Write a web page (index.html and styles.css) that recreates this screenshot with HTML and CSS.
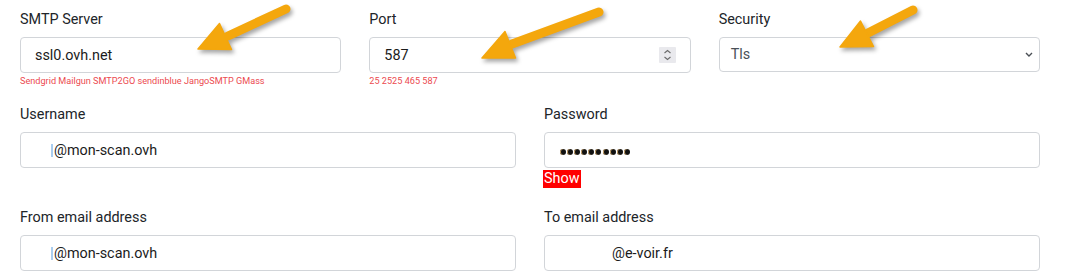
FILE: index.html
```html
<!DOCTYPE html>
<html lang="en">
<head>
<meta charset="utf-8">
<title>SMTP settings</title>
<link rel="stylesheet" href="styles.css">
</head>
<body>
<form class="form">
  <div class="row row-3">
    <div class="group">
      <label class="label">SMTP Server</label>
      <div class="field"><span class="value">ssl0.ovh.net</span></div>
      <div class="help">Sendgrid Mailgun SMTP2GO sendinblue JangoSMTP GMass</div>
    </div>
    <div class="group">
      <label class="label">Port</label>
      <div class="field field-number">
        <span class="value">587</span>
        <svg class="spinner" width="17" height="16" viewBox="0 0 17 16">
          <rect width="17" height="16" rx="1" fill="#e9e9ed"/>
          <path d="M5.5 6 L8.5 3.5 L11.5 6" fill="none" stroke="#6b6b6b" stroke-width="1.1"/>
          <path d="M5.5 10 L8.5 12.5 L11.5 10" fill="none" stroke="#6b6b6b" stroke-width="1.1"/>
        </svg>
      </div>
      <div class="help">25 2525 465 587</div>
    </div>
    <div class="group">
      <label class="label">Security</label>
      <div class="field field-select">
        <span class="value value-select">Tls</span>
        <svg class="chevron" width="8" height="5" viewBox="0 0 8 5">
          <path d="M1 1 L4 4 L7 1" fill="none" stroke="#4a4f55" stroke-width="1.4"/>
        </svg>
      </div>
    </div>
  </div>

  <div class="row row-2">
    <div class="group">
      <label class="label">Username</label>
      <div class="field"><span class="redact redact-user"></span><span class="sliver"></span><span class="value">@mon-scan.ovh</span></div>
    </div>
    <div class="group">
      <label class="label">Password</label>
      <div class="field field-pass">
        <span class="dots">
          <i class="dot"></i><i class="dot"></i><i class="dot"></i><i class="dot"></i><i class="dot"></i>
          <i class="dot"></i><i class="dot"></i><i class="dot"></i><i class="dot"></i><i class="dot"></i>
        </span>
      </div>
      <span class="show">Show</span>
    </div>
  </div>

  <div class="row row-2">
    <div class="group">
      <label class="label">From email address</label>
      <div class="field"><span class="redact redact-user"></span><span class="sliver"></span><span class="value">@mon-scan.ovh</span></div>
    </div>
    <div class="group">
      <label class="label">To email address</label>
      <div class="field"><span class="redact redact-to"></span><span class="value">@e-voir.fr</span></div>
    </div>
  </div>
</form>

<svg class="arrows" width="1067" height="279" viewBox="0 0 1067 279">
  <g class="arrow">
    <line x1="286" y1="9" x2="228" y2="36" />
    <polygon points="198,49 231.5,49.5 219.5,23.5" />
  </g>
  <g class="arrow">
    <line x1="599" y1="12" x2="512" y2="44" />
    <polygon points="482,58 515.5,58 505,31.5" />
  </g>
  <g class="arrow">
    <line x1="913" y1="10" x2="868" y2="33" />
    <polygon points="840,47 873.5,46.5 860.5,21" />
  </g>
</svg>
</body>
</html>
```

FILE: styles.css
```css
html, body {
  margin: 0;
  padding: 0;
  background: #ffffff;
}

body {
  position: relative;
  width: 1067px;
  height: 279px;
  overflow: hidden;
  font-family: Roboto, "Liberation Sans", Arial, sans-serif;
  color: #212529;
}

.form {
  padding: 9px 27px 0 20px;
}

.row {
  display: grid;
  column-gap: 28px;
}

.row-3 {
  grid-template-columns: 1fr 1fr 1fr;
  margin-bottom: 17px;
}

.row-2 {
  grid-template-columns: 1fr 1fr;
  margin-bottom: 19px;
}

.group {
  display: flex;
  flex-direction: column;
  align-items: flex-start;
}

.label {
  display: block;
  font-size: 14.4px;
  line-height: 21.6px;
  margin-bottom: 6.5px;
  color: #212529;
}

.field {
  box-sizing: border-box;
  width: 100%;
  height: 36px;
  border: 1px solid #d2d5d9;
  border-radius: 4px;
  padding: 0 14px 0 14px;
  display: flex;
  align-items: center;
  font-size: 14.4px;
  color: #1b1b1b;
  background: #fff;
}

.value {
  white-space: nowrap;
}

.field-number {
  justify-content: space-between;
}

.spinner {
  display: block;
}

.field-select {
  height: 35px;
  padding-left: 11px;
  padding-right: 6px;
  justify-content: space-between;
}

.value-select {
  color: #495057;
}

.chevron {
  display: block;
}

.help {
  margin-top: 2px;
  font-size: 9.15px;
  line-height: 12px;
  color: #ec4a50;
  white-space: nowrap;
}

.redact {
  display: inline-block;
  height: 14px;
}

.redact-user {
  width: 16px;
}

.redact-to {
  width: 53px;
}

.sliver {
  display: inline-block;
  width: 2px;
  height: 13px;
  margin-right: 1px;
  background: #a9cdef;
}

.dots {
  display: flex;
  gap: 1.1px;
  margin-left: 1px;
  margin-top: 3px;
}

.dot {
  display: block;
  width: 6px;
  height: 6px;
  border-radius: 50%;
  background: #111;
  box-shadow: inset 1px 0 0 #caa36a;
}

.show {
  margin-top: 2px;
  margin-left: -1px;
  background: #ff0000;
  color: #ffffff;
  font-size: 14.4px;
  line-height: 18px;
  padding: 0 1px;
}

.arrows {
  position: absolute;
  left: 0;
  top: 0;
  pointer-events: none;
}

.arrow {
  filter: drop-shadow(2px 3px 2px rgba(0, 0, 0, 0.35));
}

.arrow line {
  stroke: #f4a70d;
  stroke-width: 9;
  stroke-linecap: round;
}

.arrow polygon {
  fill: #f4a70d;
  stroke: #f4a70d;
  stroke-width: 1.5;
  stroke-linejoin: round;
}
```
